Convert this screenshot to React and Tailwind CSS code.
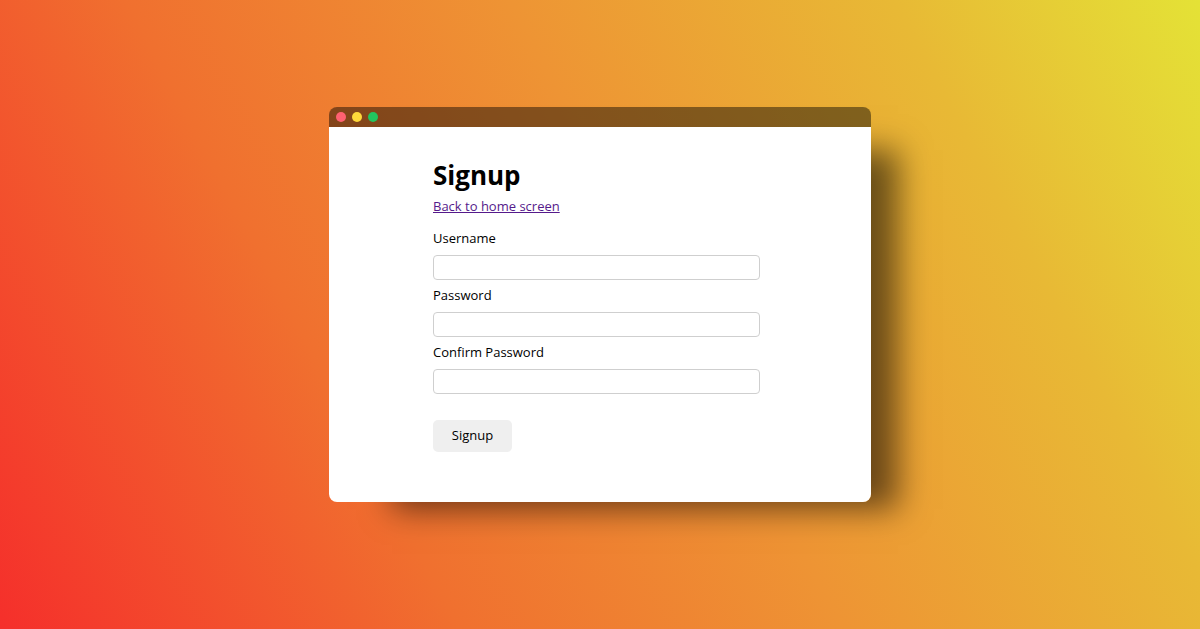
export default function App() {
    const fields = ['Username', 'Password', 'Confirm Password'];

    return (
        <div className="min-h-screen w-full flex items-center justify-center bg-[linear-gradient(62deg,#f52f2b_0%,#f0702f_30%,#ee9434_55%,#e8b935_80%,#e4e236_100%)] font-['Open_Sans',sans-serif]">
            <div className="w-[542px] -mt-[20px] rounded-[8px] overflow-hidden shadow-[45px_25px_30px_-18px_rgba(0,0,0,0.55)]">
                <div className="h-[20px] bg-black/45 flex items-center gap-[6px] pl-[7px]">
                    <span className="w-[10px] h-[10px] rounded-full bg-[#ff6171]" />
                    <span className="w-[10px] h-[10px] rounded-full bg-[#ffd93a]" />
                    <span className="w-[10px] h-[10px] rounded-full bg-[#22c55e]" />
                </div>
                <div className="bg-white h-[375px] pl-[104px] pt-[32px]">
                    <h1 className="text-[26px] leading-[32px] font-bold text-black">Signup</h1>
                    <a href="#" className="block mt-[7px] text-[13px] leading-[16px] text-[#551a8b] underline w-fit">Back to home screen</a>
                    <form className="mt-[16px] w-[327px]">
                        {fields.map((f, i) => (
                            <div key={f} className={i > 0 ? 'mt-[7px]' : ''}>
                                <label className="block text-[13px] leading-[16px] text-black">{f}</label>
                                <input type={f === 'Username' ? 'text' : 'password'} className="block mt-[9px] w-full h-[25px] border border-[#cfcfcf] rounded-[4px] bg-white" />
                            </div>
                        ))}
                        <button type="button" className="mt-[26px] w-[79px] h-[32px] rounded-[5px] bg-[#efefef] text-[13px] text-black">Signup</button>
                    </form>
                </div>
            </div>
        </div>
    );
}
